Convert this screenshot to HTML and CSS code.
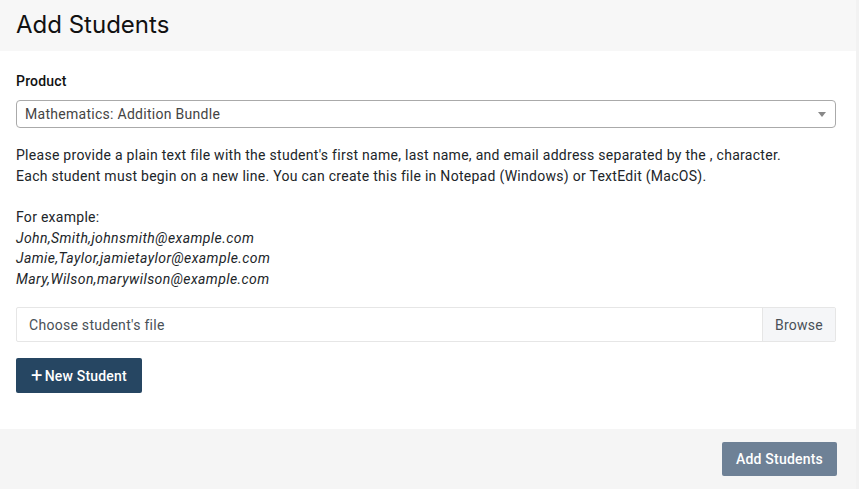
FILE: index.html
```html
<!DOCTYPE html>
<html>
<head>
<meta charset="utf-8">
<link rel="stylesheet" href="styles.css">
</head>
<body>
<div class="modal">
  <div class="modal-header"><h1 class="title">Add Students</h1></div>
  <div class="modal-body">
    <label class="label">Product</label>
    <div class="select">
      <span class="select-text">Mathematics: Addition Bundle</span>
      <span class="caret"></span>
    </div>
    <p class="help">Please provide a plain text file with the student's first name, last name, and email address separated by the , character.<br>Each student must begin on a new line. You can create this file in Notepad (Windows) or TextEdit (MacOS).</p>
    <p class="help">For example:<br><em>John,Smith,johnsmith@example.com</em><br><em>Jamie,Taylor,jamietaylor@example.com</em><br><em>Mary,Wilson,marywilson@example.com</em></p>
    <div class="file">
      <span class="file-text">Choose student's file</span>
      <span class="file-btn">Browse</span>
    </div>
    <button class="btn-new"><span class="plus">+</span> New Student</button>
  </div>
  <div class="modal-footer">
    <button class="btn-add">Add Students</button>
  </div>
</div>
</body>
</html>
```
FILE: styles.css
```css
html, body { margin: 0; padding: 0; }
body {
  background: #f2f2f2;
  font-family: Roboto, "Liberation Sans", sans-serif;
  font-size: 14px;
  letter-spacing: 0.28px;
  color: #212529;
  width: 859px;
  height: 489px;
  overflow: hidden;
}
.modal {
  width: 856px;
  background: #fff;
}
.modal-header {
  background: #f7f7f7;
  height: 51px;
  padding: 0 16px;
  display: flex;
  align-items: center;
}
.title {
  margin: 0;
  font-family: Inter, "Noto Sans", sans-serif;
  font-weight: 400;
  font-size: 24px;
  letter-spacing: 0;
  color: #111;
  line-height: 1;
  padding-bottom: 1px;
}
.modal-body {
  padding: 20px 20px 36px 16px;
}
.label {
  display: block;
  font-weight: 500;
  font-size: 14px;
  line-height: 20px;
  color: #111;
  letter-spacing: 0.2px;
  margin-bottom: 9px;
}
.select {
  height: 28px;
  box-sizing: border-box;
  border: 1px solid #aaa;
  border-radius: 4px;
  display: flex;
  align-items: center;
  padding: 0 8px;
  justify-content: space-between;
}
.select-text { color: #444; }
.caret {
  width: 0; height: 0;
  border-left: 4px solid transparent;
  border-right: 4px solid transparent;
  border-top: 5px solid #888;
  margin-right: 1px;
}
.help {
  margin: 17px 0 0 0;
  line-height: 20.5px;
  color: #212529;
}
.help + .help { margin-top: 21px; }
.help em { letter-spacing: 0.42px; }
.file {
  margin-top: 18px;
  height: 35px;
  box-sizing: border-box;
  border: 1px solid #e6e6e6;
  border-radius: 2px;
  display: flex;
  align-items: stretch;
}
.file-text {
  flex: 1;
  display: flex;
  align-items: center;
  padding-left: 12px;
  color: #495057;
}
.file-btn {
  width: 72px;
  display: flex;
  align-items: center;
  justify-content: center;
  background: #f5f6f8;
  border-left: 1px solid #e6e6e6;
  color: #495057;
}
.btn-new {
  margin-top: 16px;
  height: 35px;
  width: 126px;
  background: #264662;
  color: #fff;
  border: none;
  border-radius: 2px;
  font-family: inherit;
  font-size: 14px;
  font-weight: 500;
  letter-spacing: 0.2px;
  padding: 0;
  display: flex;
  align-items: center;
  justify-content: center;
  gap: 2px;
}
.plus { font-size: 20px; line-height: 1; font-weight: 400; margin-top: -2px; }
.modal-footer {
  background: #f5f5f5;
  height: 60px;
  display: flex;
  justify-content: flex-end;
  align-items: center;
  padding-right: 20px;
}
.btn-add {
  height: 34px;
  width: 115px;
  margin-right: -1px;
  background: #6e8196;
  color: #fff;
  border: none;
  border-radius: 2px;
  font-family: inherit;
  font-size: 14px;
  font-weight: 500;
  letter-spacing: 0.2px;
  padding: 0;
}
```
